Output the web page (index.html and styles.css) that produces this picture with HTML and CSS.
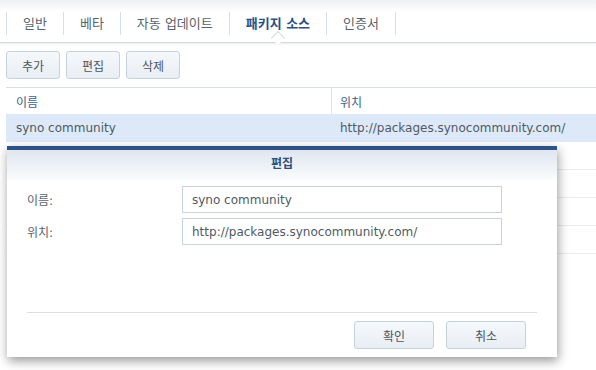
FILE: index.html
```html
<!DOCTYPE html>
<html lang="ko">
<head>
  <meta charset="UTF-8" />
  <meta name="viewport" content="width=device-width, initial-scale=1.0"/>
  <title>패키지 소스</title>
  <link rel="stylesheet" href="styles.css">
</head>
<body>

<div class="page">
  <div class="top"><span>운영</span></div>

  <nav class="tabs">
    <a href="#">일반</a>
    <a href="#">베타</a>
    <a href="#">자동 업데이트</a>
    <a href="#" class="active">패키지 소스</a>
    <a href="#">인증서</a>
  </nav>

  <div class="toolbar">
    <button class="btn">추가</button>
    <button class="btn">편집</button>
    <button class="btn">삭제</button>
  </div>

  <div class="table">
    <div class="row head">
      <div class="cell name">이름</div>
      <div class="cell url">위치</div>
    </div>
    <div class="row selected">
      <div class="cell name">syno community</div>
      <div class="cell url">http://packages.synocommunity.com/</div>
    </div>
    <div class="row"></div>
    <div class="row"></div>
    <div class="row"></div>
    <div class="row"></div>
  </div>

  <div class="dialog">
    <div class="dialog-title">편집</div>
    <div class="form">
      <label>이름:</label>
      <input type="text" value="syno community">
      <label>위치:</label>
      <input type="text" value="http://packages.synocommunity.com/">
    </div>
    <div class="dialog-foot">
      <button class="btn wide">확인</button>
      <button class="btn wide">취소</button>
    </div>
  </div>
</div>

</body>
</html>
```

FILE: styles.css
```css
body {
  margin: 0;
  font-family: "DejaVu Sans", "Noto Sans CJK KR", sans-serif;
  font-size: 12px;
  color: #505a64;
  background: #fff;
}
.page {
  position: relative;
  width: 596px;
  height: 370px;
  overflow: hidden;
}
.top {
  height: 12px;
  overflow: hidden;
  background: linear-gradient(#eef0f2, #fff);
}
.top span {
  display: block;
  margin: -13px 0 0 325px;
  line-height: 15px;
  color: #b4b9bf;
}
.tabs {
  display: flex;
  height: 30px;
  padding-left: 6px;
  border-bottom: 1px solid #d3d9e0;
  box-shadow: 0 1px 2px rgba(0, 0, 0, 0.08);
}
.tabs a {
  position: relative;
  height: 23px;
  line-height: 23px;
  padding: 0 16px;
  border-left: 1px solid #d8dee6;
  color: #59636e;
  font-size: 13px;
  text-decoration: none;
}
.tabs a:last-child {
  border-right: 1px solid #d8dee6;
}
.tabs a.active {
  color: #2a5185;
  font-weight: bold;
}
.tabs a.active::after {
  content: "";
  position: absolute;
  left: 50%;
  bottom: -8px;
  width: 9px;
  height: 9px;
  margin-left: -5px;
  background: #fff;
  border-left: 1px solid #d3d9e0;
  border-top: 1px solid #d3d9e0;
  transform: rotate(45deg);
}
.toolbar {
  display: flex;
  gap: 6px;
  padding: 8px 0 0 6px;
}
.btn {
  width: 54px;
  height: 28px;
  padding: 0;
  border: 1px solid #c6d1dd;
  border-radius: 3px;
  background: linear-gradient(#f5f8fb, #e9eef4);
  color: #4c5661;
  font-family: inherit;
  font-size: 12px;
}
.btn.wide {
  width: 80px;
}
.table {
  margin: 8px 0 0 6px;
  border-top: 1px solid #d8e0e9;
}
.row {
  display: flex;
  height: 28px;
  border-bottom: 1px solid #e9edf2;
  box-sizing: border-box;
}
.row.head {
  height: 26px;
  border-bottom: none;
  color: #3f6089;
}
.row.selected {
  background: #dde9f8;
  border-bottom: none;
}
.cell {
  display: flex;
  align-items: center;
}
.cell.name {
  width: 315px;
  padding-left: 10px;
}
.cell.url {
  padding-left: 9px;
}
.head .cell.url {
  border-left: 1px solid #dfe5ec;
  padding-left: 8px;
}
.dialog {
  position: absolute;
  left: 7px;
  top: 146px;
  width: 550px;
  height: 211px;
  box-sizing: border-box;
  display: flex;
  flex-direction: column;
  background: #fff;
  border-top: 4px solid #2c5286;
  box-shadow: 1px 4px 10px rgba(0, 0, 0, 0.4);
}
.dialog-title {
  height: 30px;
  line-height: 28px;
  text-align: center;
  font-weight: bold;
  color: #2b4f7f;
  background: linear-gradient(#dfe6ef, #fbfcfd);
}
.form {
  display: grid;
  grid-template-columns: 155px 320px;
  grid-auto-rows: 27px;
  row-gap: 5px;
  padding: 6px 20px 0;
  flex: 1;
}
.form label {
  display: flex;
  align-items: center;
  color: #59636e;
}
.form input {
  height: 27px;
  box-sizing: border-box;
  margin: 0;
  padding: 0 9px;
  border: 1px solid #c7d3e0;
  color: #505a64;
  font-family: inherit;
  font-size: 12px;
  outline: none;
}
.dialog-foot {
  display: flex;
  justify-content: flex-end;
  gap: 12px;
  margin: 0 20px;
  padding: 8px 11px 8px 0;
  border-top: 1px solid #dedede;
}
```
